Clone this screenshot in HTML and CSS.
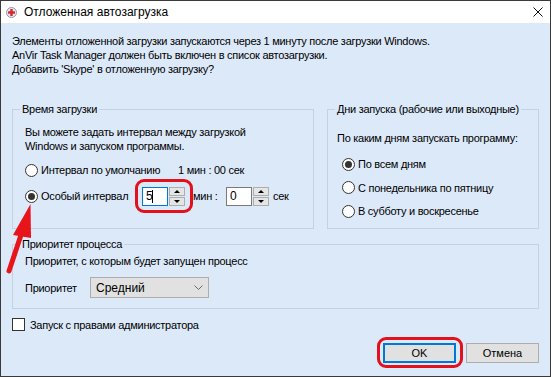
FILE: index.html
```html
<!DOCTYPE html>
<html lang="ru">
<head>
    <meta charset="UTF-8">
    <title>Отложенная автозагрузка</title>
    <link rel="stylesheet" href="styles.css">
</head>
<body>
    <div class="window">
        <!-- Title bar -->
        <div class="titlebar">
            <svg class="app-icon" viewBox="0 0 11 11">
                <circle cx="5.5" cy="5.5" r="5" fill="#e4ebf3" stroke="#8d9aab" stroke-width="1"/>
                <rect x="4.3" y="2" width="2.4" height="7" fill="#e0232b"/>
                <rect x="2" y="4.3" width="7" height="2.4" fill="#e0232b"/>
            </svg>
            <span class="title">Отложенная автозагрузка</span>
            <svg class="close" viewBox="0 0 10 10">
                <path d="M0.5 0.5 L9.5 9.5 M9.5 0.5 L0.5 9.5" stroke="#111" stroke-width="1"/>
            </svg>
        </div>

        <div class="content">
            <p class="message">
                Элементы отложенной загрузки запускаются через 1 минуту после загрузки Windows.<br>
                AnVir Task Manager должен быть включен в список автозагрузки.<br>
                Добавить 'Skype' в отложенную загрузку?
            </p>

            <div class="groups">
                <!-- Start time -->
                <fieldset class="group group-time">
                    <legend>Время загрузки</legend>
                    <div class="group-body">
                        <p class="hint">Вы можете задать интервал между загрузкой<br>Windows и запуском программы.</p>
                        <div class="option-row first">
                            <span class="radio"></span>
                            <span class="label-default">Интервал по умолчанию</span>
                            <span>1 мин : 00 сек</span>
                        </div>
                        <div class="option-row second">
                            <span class="radio checked"></span>
                            <span class="label-custom">Особый интервал</span>
                            <div class="spin focused">
                                <div class="spin-edit">5<span class="caret"></span></div>
                                <div class="spin-btns">
                                    <span class="spin-btn up"></span>
                                    <span class="spin-btn down"></span>
                                </div>
                                <span class="ring ring-spin"></span>
                            </div>
                            <span class="unit-min">мин :</span>
                            <div class="spin">
                                <div class="spin-edit">0</div>
                                <div class="spin-btns">
                                    <span class="spin-btn up"></span>
                                    <span class="spin-btn down"></span>
                                </div>
                            </div>
                            <span class="unit-sec">сек</span>
                        </div>
                    </div>
                </fieldset>

                <!-- Days -->
                <fieldset class="group group-days">
                    <legend>Дни запуска (рабочие или выходные)</legend>
                    <div class="group-body">
                        <p class="hint">По каким дням запускать программу:</p>
                        <div class="day-list">
                            <div class="option-row"><span class="radio checked"></span><span>По всем дням</span></div>
                            <div class="option-row"><span class="radio"></span><span>С понедельника по пятницу</span></div>
                            <div class="option-row"><span class="radio"></span><span>В субботу и воскресенье</span></div>
                        </div>
                    </div>
                </fieldset>
            </div>

            <!-- Priority -->
            <fieldset class="group group-priority">
                <legend>Приоритет процесса</legend>
                <div class="group-body">
                    <p class="hint">Приоритет, с которым будет запущен процесс</p>
                    <div class="priority-row">
                        <span class="priority-label">Приоритет</span>
                        <div class="combo">
                            <span>Средний</span>
                            <svg class="chevron" viewBox="0 0 9 5">
                                <path d="M0.5 0.5 L4.5 4.5 L8.5 0.5" fill="none" stroke="#6a6a6a" stroke-width="1"/>
                            </svg>
                        </div>
                    </div>
                </div>
            </fieldset>

            <div class="check-row">
                <span class="checkbox"></span>
                <span>Запуск с правами администратора</span>
            </div>

            <div class="buttons">
                <button class="btn default">OK<span class="ring ring-ok"></span></button>
                <button class="btn">Отмена</button>
            </div>
        </div>
    </div>

    <!-- Red arrow annotation -->
    <svg class="annotation" width="551" height="377">
        <line x1="9" y1="271" x2="22" y2="232" stroke="#e8141c" stroke-width="5" stroke-linecap="round"/>
        <polygon points="30.5,204 13,235 31,238" fill="#e8141c"/>
    </svg>
</body>
</html>
```

FILE: styles.css
```css
body {
    margin: 0;
    position: relative;
    font-family: "Liberation Sans", Arial, sans-serif;
    font-size: 11px;
    letter-spacing: -0.27px;
    color: #000;
}

.window {
    width: 551px;
    height: 377px;
    box-sizing: border-box;
    border: 1px solid #3a3a3a;
    background-color: #dce9f9;
}

.titlebar {
    height: 22px;
    background-color: #fff;
    display: flex;
    align-items: center;
    padding-left: 5px;
}

.app-icon {
    width: 11px;
    height: 11px;
}

.title {
    flex: 1;
    margin-left: 7px;
    font-size: 12px;
    letter-spacing: 0;
}

.close {
    width: 10px;
    height: 10px;
    margin-right: 7px;
}

.content {
    padding: 11px 11px 0;
}

.message {
    margin: 0;
    line-height: 14px;
}

.groups {
    display: flex;
    gap: 13px;
    margin-top: 26px;
}

.group {
    margin: 0;
    padding: 0;
    min-width: 0;
    box-sizing: border-box;
    border: 1px solid #c3d1e0;
}

.group legend {
    margin-left: 7px;
    padding: 0 2px;
    line-height: 14px;
}

.hint {
    margin: 0;
    line-height: 14px;
}

.group-time {
    width: 302px;
    height: 127px;
}

.group-time .group-body {
    padding: 9px 0 0 12px;
}

.group-days {
    flex: 1;
    height: 127px;
}

.group-days .group-body {
    padding: 15px 0 0 9px;
}

.option-row {
    display: flex;
    align-items: center;
    height: 20px;
}

.option-row.first {
    margin-top: 7px;
}

.option-row.second {
    margin-top: 6px;
}

.radio {
    width: 13px;
    height: 13px;
    box-sizing: border-box;
    border: 1px solid #333;
    border-radius: 50%;
    background-color: #fff;
    margin-right: 3px;
    position: relative;
}

.radio.checked::after {
    content: "";
    position: absolute;
    left: 2px;
    top: 2px;
    width: 7px;
    height: 7px;
    border-radius: 50%;
    background-color: #333;
}

.label-default {
    width: 137px;
}

.label-custom {
    width: 101px;
}

.spin {
    position: relative;
    display: flex;
    gap: 1px;
    height: 19px;
}

.spin-edit {
    width: 26px;
    box-sizing: border-box;
    border: 1px solid #7a7a7a;
    background-color: #fff;
    padding-left: 3px;
    line-height: 17px;
    font-size: 12px;
    display: flex;
    align-items: center;
}

.spin.focused .spin-edit {
    border-color: #0078d7;
}

.caret {
    width: 1px;
    height: 13px;
    background-color: #000;
}

.spin-btns {
    width: 16px;
    display: flex;
    flex-direction: column;
    gap: 1px;
}

.spin-btn {
    flex: 1;
    box-sizing: border-box;
    border: 1px solid #adadad;
    background-color: #e5e5e5;
    position: relative;
}

.spin-btn::after {
    content: "";
    position: absolute;
    left: 4px;
    top: 2px;
    border-left: 3px solid transparent;
    border-right: 3px solid transparent;
}

.spin-btn.up::after {
    border-bottom: 3px solid #000;
}

.spin-btn.down::after {
    border-top: 3px solid #000;
}

.unit-min {
    margin-left: 8px;
    width: 33px;
}

.unit-sec {
    margin-left: 4px;
}

.day-list {
    display: flex;
    flex-direction: column;
    gap: 3.5px;
    margin-top: 9px;
    padding-left: 5px;
}

.group-priority {
    width: 100%;
    height: 72px;
    margin-top: 8px;
}

.group-priority .group-body {
    padding: 3px 0 0 12px;
}

.priority-row {
    display: flex;
    align-items: center;
    margin-top: 9px;
}

.priority-label {
    width: 65px;
}

.combo {
    width: 119px;
    height: 21px;
    box-sizing: border-box;
    border: 1px solid #adadad;
    background-color: #e1e1e1;
    display: flex;
    align-items: center;
    justify-content: space-between;
    padding: 0 5px 0 5px;
    font-size: 12px;
    letter-spacing: 0;
}

.chevron {
    width: 9px;
    height: 5px;
}

.check-row {
    display: flex;
    align-items: center;
    gap: 5px;
    margin-top: 9px;
    height: 13px;
}

.checkbox {
    width: 13px;
    height: 13px;
    box-sizing: border-box;
    border: 1px solid #333;
    background-color: #fff;
}

.buttons {
    display: flex;
    justify-content: flex-end;
    gap: 10px;
    margin-top: 12px;
}

.btn {
    position: relative;
    width: 73px;
    height: 20px;
    box-sizing: border-box;
    border: 1px solid #adadad;
    background-color: #e1e1e1;
    font-family: "Liberation Sans", Arial, sans-serif;
    font-size: 11px;
    color: #000;
    padding: 0;
}

.btn.default {
    border: 2px solid #0078d7;
}

.ring {
    position: absolute;
    border: 3px solid #e3111b;
    border-radius: 9px;
    pointer-events: none;
}

.ring-spin {
    left: -7px;
    right: -8px;
    top: -8px;
    bottom: -7px;
}

.ring-ok {
    left: -8px;
    right: -9px;
    top: -8px;
    bottom: -7px;
}

.annotation {
    position: absolute;
    left: 0;
    top: 0;
    pointer-events: none;
}
```
